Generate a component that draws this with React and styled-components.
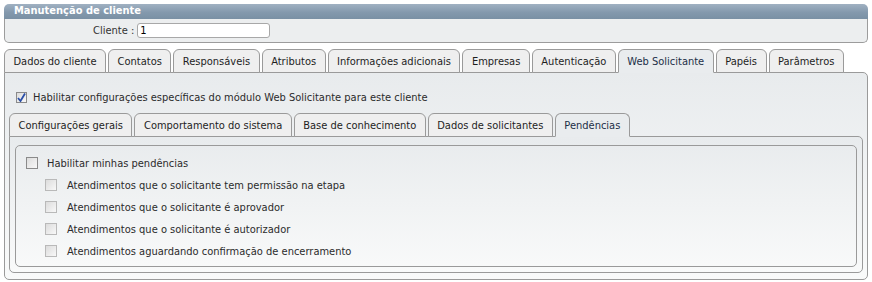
import React from 'react';
import styled, { createGlobalStyle } from 'styled-components';

const GlobalStyle = createGlobalStyle`
  body {
    margin: 0;
    background: #ffffff;
    font-family: Tahoma, 'DejaVu Sans Condensed', 'DejaVu Sans', sans-serif;
    font-size: 11px;
    color: #2b2b2b;
  }
`;

const Page = styled.div`
  padding: 4px 4px 0 4px;
  width: 864px;
`;

const TitleBar = styled.div`
  height: 15px;
  line-height: 14px;
  padding-left: 10px;
  border-radius: 5px 5px 0 0;
  background: linear-gradient(#a0b1c2, #8499ad 55%, #7a90a4);
  color: #ffffff;
  font-weight: bold;
`;

const ClientBox = styled.div`
  height: 23px;
  border: 1px solid #9c9c9c;
  border-top: none;
  border-radius: 0 0 5px 5px;
  background: #eceeef;
  display: flex;
  align-items: center;
  padding-left: 88px;
  gap: 3px;
`;

const Label = styled.span`
  color: #333;
`;

const TextInput = styled.input`
  width: 127px;
  height: 13px;
  border: 1px solid #a8a8a8;
  border-radius: 3px;
  padding: 0 2px;
  font: inherit;
  font-size: 11px;
  color: #000;
  background: #fff;
`;

const Tabs = styled.div`
  display: flex;
  gap: 2px;
  margin-top: ${p => p.$top}px;
  position: relative;
  z-index: 1;
`;

const Tab = styled.div`
  height: 22px;
  line-height: 23px;
  padding: 0 8.5px;
  border: 1px solid #9a9a9a;
  border-bottom: ${p => (p.$active ? '1px solid #e9ecee' : '1px solid #9a9a9a')};
  border-radius: 6px 6px 0 0;
  background: ${p => (p.$active ? '#e9ecee' : '#efefef')};
  color: ${p => (p.$active ? '#1c2f48' : '#1e1e1e')};
  white-space: nowrap;
`;

const Panel = styled.div`
  margin-top: -1px;
  border: 1px solid #9a9a9a;
  border-radius: 0 5px 5px 5px;
  background: linear-gradient(#e8ebed, #f9fafa);
  height: ${p => p.$height}px;
  box-sizing: border-box;
  padding: ${p => p.$pad};
`;

const Row = styled.label`
  display: flex;
  align-items: center;
  gap: ${p => p.$gap}px;
  height: ${p => p.$h}px;
  padding-left: ${p => p.$indent}px;
`;

const Box = styled.span`
  width: ${p => p.$size}px;
  height: ${p => p.$size}px;
  box-sizing: border-box;
  border: 1px solid ${p => (p.$dark ? '#8a8a8a' : '#b9b9b9')};
  background: linear-gradient(135deg, #dcdcdc, #f8f8f8);
  display: flex;
  align-items: center;
  justify-content: center;
  flex-shrink: 0;
`;

const Fieldset = styled.div`
  border: 1px solid #9a9a9a;
  border-radius: 5px;
  height: 122px;
  box-sizing: border-box;
  padding-top: 6px;
`;

const Check = ({ checked, size = 12, dark }) => (
  <Box $size={size} $dark={dark}>
    {checked && (
      <svg width="9" height="9" viewBox="0 0 9 9">
        <path d="M1 5 L3.5 8 L8 0.5" fill="none" stroke="#2a4fa8" strokeWidth="1.8" />
      </svg>
    )}
  </Box>
);

const mainTabs = [
  'Dados do cliente', 'Contatos', 'Responsáveis', 'Atributos', 'Informações adicionais',
  'Empresas', 'Autenticação', 'Web Solicitante', 'Papéis', 'Parâmetros',
];

const innerTabs = [
  'Configurações gerais', 'Comportamento do sistema', 'Base de conhecimento',
  'Dados de solicitantes', 'Pendências',
];

const subItems = [
  'Atendimentos que o solicitante tem permissão na etapa',
  'Atendimentos que o solicitante é aprovador',
  'Atendimentos que o solicitante é autorizador',
  'Atendimentos aguardando confirmação de encerramento',
];

export default function App() {
  return (
    <Page>
      <GlobalStyle />
      <TitleBar>Manutenção de cliente</TitleBar>
      <ClientBox>
        <Label>Cliente :</Label>
        <TextInput defaultValue="1" />
      </ClientBox>

      <Tabs $top={6}>
        {mainTabs.map(t => (
          <Tab key={t} $active={t === 'Web Solicitante'}>{t}</Tab>
        ))}
      </Tabs>
      <Panel $height={208} $pad="13px 4px 0 4px">
        <Row $gap={6} $h={22} $indent={7}>
          <Check checked size={11} dark />
          <span>Habilitar configurações específicas do módulo Web Solicitante para este cliente</span>
        </Row>
        <Tabs $top={5}>
          {innerTabs.map(t => (
            <Tab key={t} $active={t === 'Pendências'}>{t}</Tab>
          ))}
        </Tabs>
        <Panel $height={137} $pad="8px 5px 0 5px">
          <Fieldset>
            <Row $gap={9} $h={22} $indent={10}>
              <Check size={12} dark />
              <span>Habilitar minhas pendências</span>
            </Row>
            {subItems.map(s => (
              <Row key={s} $gap={10} $h={22} $indent={29}>
                <Check size={12} />
                <span>{s}</span>
              </Row>
            ))}
          </Fieldset>
        </Panel>
      </Panel>
    </Page>
  );
}
